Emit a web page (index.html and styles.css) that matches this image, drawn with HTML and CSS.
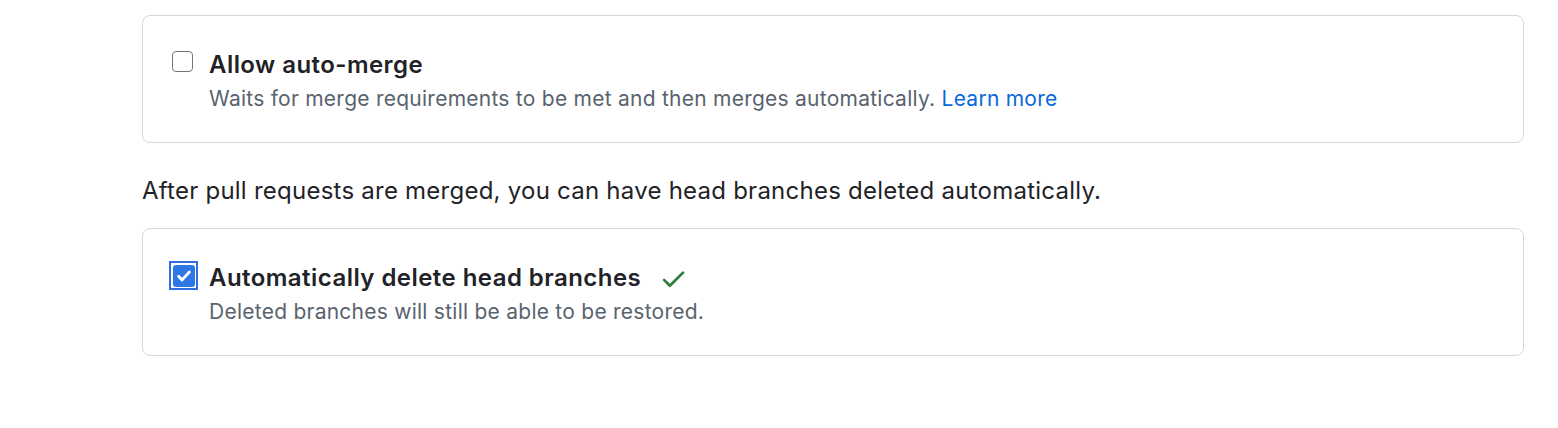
FILE: index.html
```html
<!DOCTYPE html>
<html>
<head>
<meta charset="utf-8">
<link rel="stylesheet" href="styles.css">
</head>
<body>
<div class="page">
  <div class="card">
    <div class="option">
      <span class="box-wrap"><span class="checkbox"></span></span>
      <div class="option-body">
        <div class="option-title">Allow auto-merge</div>
        <div class="option-desc">Waits for merge requirements to be met and then merges automatically. <a class="link" href="#">Learn more</a></div>
      </div>
    </div>
  </div>
  <p class="intro">After pull requests are merged, you can have head branches deleted automatically.</p>
  <div class="card">
    <div class="option">
      <span class="box-wrap focused"><span class="checkbox checked">
        <svg viewBox="0 0 16 16" width="20" height="20"><path d="M3.7 8.3l2.8 2.8 5.8-6.3" fill="none" stroke="#fff" stroke-width="2.3" stroke-linecap="round" stroke-linejoin="round"/></svg>
      </span></span>
      <div class="option-body">
        <div class="option-title">Automatically delete head branches
          <svg class="saved" viewBox="0 0 16 16" width="29" height="29"><path d="M13.78 4.22a.75.75 0 0 1 0 1.06l-7.25 7.25a.75.75 0 0 1-1.06 0L2.22 9.28a.75.75 0 0 1 1.06-1.06L6 10.94l6.72-6.72a.75.75 0 0 1 1.06 0Z" fill="#2f7d3b"/></svg>
        </div>
        <div class="option-desc">Deleted branches will still be able to be restored.</div>
      </div>
    </div>
  </div>
</div>
</body>
</html>
```
FILE: styles.css
```css
* { box-sizing: border-box; }
html, body { margin: 0; padding: 0; background: #fff; }
body {
  font-family: Inter, "Noto Sans", "Liberation Sans", sans-serif;
  color: #1f2328;
}
.page {
  padding: 15px 0 0 142px;
  width: 1524px;
}
.card {
  border: 1px solid #d1d9e0;
  border-radius: 8px;
  height: 128px;
  padding: 34px 20px 0 26px;
}
.option {
  display: flex;
  align-items: flex-start;
}
.box-wrap {
  flex: none;
  width: 29px;
  height: 29px;
  margin-top: -2px;
  margin-right: 11px;
  padding: 1px;
  border: 2px solid transparent;
}
.box-wrap.focused {
  border-color: #2f6fe0;
  padding: 1.5px;
}
.checkbox {
  width: 21px;
  height: 21px;
  border: 1.5px solid #76767a;
  border-radius: 4px;
  display: flex;
  align-items: center;
  justify-content: center;
}
.checkbox.checked {
  width: 22px;
  height: 22px;
  background: #2f76e6;
  border: none;
  border-radius: 3px;
}
.option-title {
  font-size: 24px;
  font-weight: 600;
  letter-spacing: 0.45px;
  line-height: 30px;
  display: flex;
  align-items: center;
}
.saved { margin-left: 18px; }
.option-desc {
  font-size: 21px;
  letter-spacing: 0.25px;
  line-height: 26px;
  color: #59636e;
  margin-top: 6px;
}
.link { color: #0969da; text-decoration: none; }
.intro {
  font-size: 24px;
  letter-spacing: 0.24px;
  line-height: 30px;
  margin: 33px 0 22px;
}
```
